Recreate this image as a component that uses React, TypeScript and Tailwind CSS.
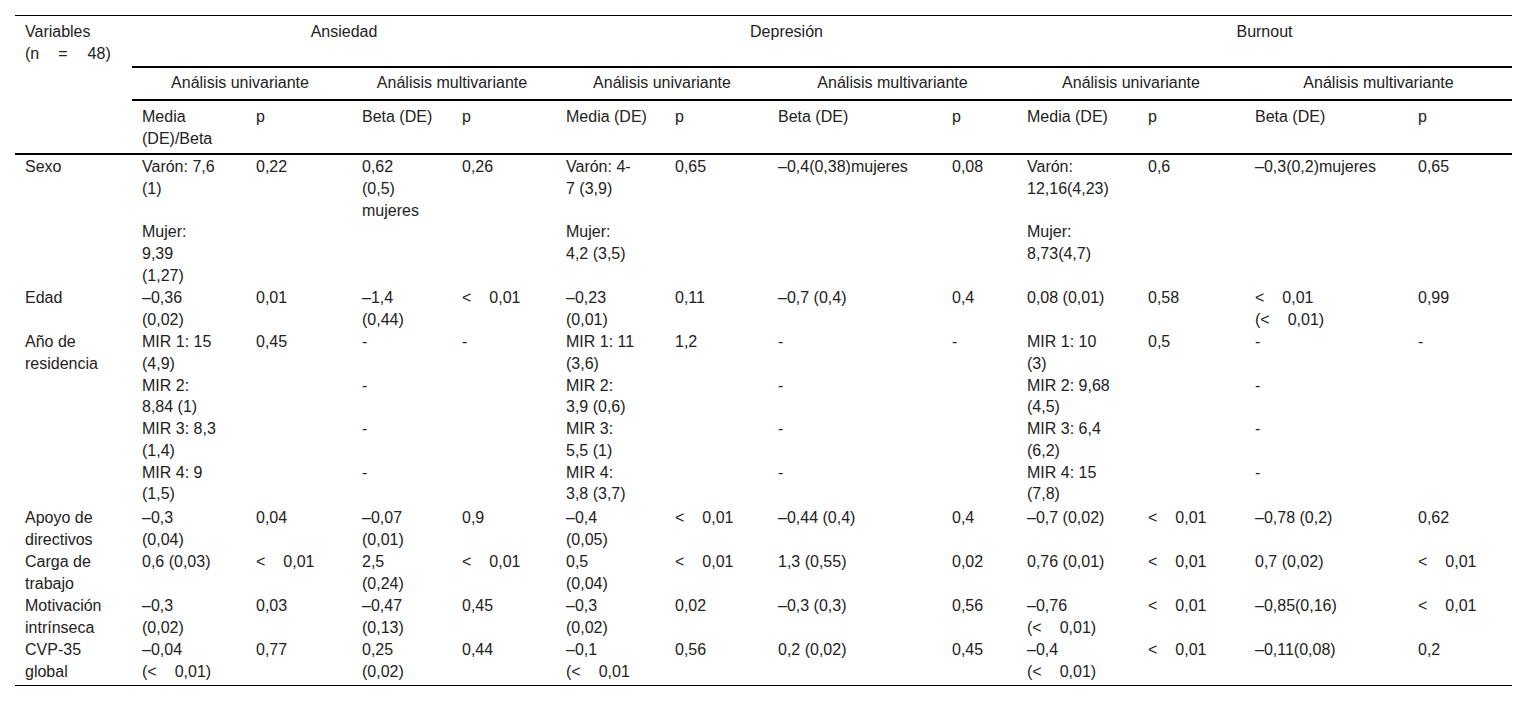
import React from "react";

type Cell = string[];

const COLS =
  "grid grid-cols-[117px_114px_106px_100px_104px_109px_103px_174px_75px_121px_107px_163px_104px]";

function renderLine(line: string) {
  if (!line.includes("<")) return line;
  const parts = line.split("<");
  return (
    <>
      {parts[0]}
      {"<"}
      <span className="inline-block w-[18px]" />
      {parts[1].replace(/^ /, "")}
    </>
  );
}

// extra top padding classes per row (logical group starts)
const ROWPAD = [
  "",
  "",
  "pt-[0.5px]",
  "pt-[0.5px]",
  "",
  "",
  "",
  "pt-[2px]",
  "pt-[0.5px]",
  "pt-[0.5px]",
  "pt-[0.5px]",
];

const rows: Cell[][] = [
  [
    ["Sexo"],
    ["Varón: 7,6", "(1)"],
    ["0,22"],
    ["0,62", "(0,5)", "mujeres"],
    ["0,26"],
    ["Varón: 4-", "7 (3,9)"],
    ["0,65"],
    ["–0,4(0,38)mujeres"],
    ["0,08"],
    ["Varón:", "12,16(4,23)"],
    ["0,6"],
    ["–0,3(0,2)mujeres"],
    ["0,65"],
  ],
  [
    [],
    ["Mujer:", "9,39", "(1,27)"],
    [],
    [],
    [],
    ["Mujer:", "4,2 (3,5)"],
    [],
    [],
    [],
    ["Mujer:", "8,73(4,7)"],
    [],
    [],
    [],
  ],
  [
    ["Edad"],
    ["–0,36", "(0,02)"],
    ["0,01"],
    ["–1,4", "(0,44)"],
    ["< 0,01"],
    ["–0,23", "(0,01)"],
    ["0,11"],
    ["–0,7 (0,4)"],
    ["0,4"],
    ["0,08 (0,01)"],
    ["0,58"],
    ["< 0,01", "(< 0,01)"],
    ["0,99"],
  ],
  [
    ["Año de", "residencia"],
    ["MIR 1: 15", "(4,9)"],
    ["0,45"],
    ["-"],
    ["-"],
    ["MIR 1: 11", "(3,6)"],
    ["1,2"],
    ["-"],
    ["-"],
    ["MIR 1: 10", "(3)"],
    ["0,5"],
    ["-"],
    ["-"],
  ],
  [
    [],
    ["MIR 2:", "8,84 (1)"],
    [],
    ["-"],
    [],
    ["MIR 2:", "3,9 (0,6)"],
    [],
    ["-"],
    [],
    ["MIR 2: 9,68", "(4,5)"],
    [],
    ["-"],
    [],
  ],
  [
    [],
    ["MIR 3: 8,3", "(1,4)"],
    [],
    ["-"],
    [],
    ["MIR 3:", "5,5 (1)"],
    [],
    ["-"],
    [],
    ["MIR 3: 6,4", "(6,2)"],
    [],
    ["-"],
    [],
  ],
  [
    [],
    ["MIR 4: 9", "(1,5)"],
    [],
    ["-"],
    [],
    ["MIR 4:", "3,8 (3,7)"],
    [],
    ["-"],
    [],
    ["MIR 4: 15", "(7,8)"],
    [],
    ["-"],
    [],
  ],
  [
    ["Apoyo de", "directivos"],
    ["–0,3", "(0,04)"],
    ["0,04"],
    ["–0,07", "(0,01)"],
    ["0,9"],
    ["–0,4", "(0,05)"],
    ["< 0,01"],
    ["–0,44 (0,4)"],
    ["0,4"],
    ["–0,7 (0,02)"],
    ["< 0,01"],
    ["–0,78 (0,2)"],
    ["0,62"],
  ],
  [
    ["Carga de", "trabajo"],
    ["0,6 (0,03)"],
    ["< 0,01"],
    ["2,5", "(0,24)"],
    ["< 0,01"],
    ["0,5", "(0,04)"],
    ["< 0,01"],
    ["1,3 (0,55)"],
    ["0,02"],
    ["0,76 (0,01)"],
    ["< 0,01"],
    ["0,7 (0,02)"],
    ["< 0,01"],
  ],
  [
    ["Motivación", "intrínseca"],
    ["–0,3", "(0,02)"],
    ["0,03"],
    ["–0,47", "(0,13)"],
    ["0,45"],
    ["–0,3", "(0,02)"],
    ["0,02"],
    ["–0,3 (0,3)"],
    ["0,56"],
    ["–0,76", "(< 0,01)"],
    ["< 0,01"],
    ["–0,85(0,16)"],
    ["< 0,01"],
  ],
  [
    ["CVP-35", "global"],
    ["–0,04", "(< 0,01)"],
    ["0,77"],
    ["0,25", "(0,02)"],
    ["0,44"],
    ["–0,1", "(< 0,01"],
    ["0,56"],
    ["0,2 (0,02)"],
    ["0,45"],
    ["–0,4", "(< 0,01)"],
    ["< 0,01"],
    ["–0,11(0,08)"],
    ["0,2"],
  ],
];

const sub = [
  "Media|(DE)/Beta",
  "p",
  "Beta (DE)",
  "p",
  "Media (DE)",
  "p",
  "Beta (DE)",
  "p",
  "Media (DE)",
  "p",
  "Beta (DE)",
  "p",
];

export default function App() {
  return (
    <div className="w-[1513px] h-[702px] bg-white font-['Liberation_Sans',Arial,sans-serif] text-[16px] leading-[21.75px] text-[#222]">
      <div className="pt-[15px] pl-[15px]">
        <div className="w-[1497px] border-t border-b border-black">
          {/* header */}
          <div className={COLS}>
            <div className="row-span-3 border-b-2 border-black pl-[10px] pt-[5px] whitespace-nowrap">
              <div>Variables</div>
              <div>
                (n<span className="inline-block w-[19px]" />=
                <span className="inline-block w-[20px]" />
                48)
              </div>
            </div>
            <div className="col-span-4 h-[52px] border-b-2 border-black pt-[5px] text-center">
              Ansiedad
            </div>
            <div className="col-span-4 h-[52px] border-b-2 border-black pt-[5px] text-center">
              Depresión
            </div>
            <div className="col-span-4 h-[52px] border-b-2 border-black pt-[5px] text-center">
              Burnout
            </div>

            <div className="col-span-2 h-[33px] border-b-2 border-black pt-[4px] pr-[4px] text-center">
              Análisis univariante
            </div>
            <div className="col-span-2 h-[33px] border-b-2 border-black pt-[4px] pr-[4px] text-center">
              Análisis multivariante
            </div>
            <div className="col-span-2 h-[33px] border-b-2 border-black pt-[4px] text-center">
              Análisis univariante
            </div>
            <div className="col-span-2 h-[33px] border-b-2 border-black pt-[4px] text-center">
              Análisis multivariante
            </div>
            <div className="col-span-2 h-[33px] border-b-2 border-black pt-[4px] text-center">
              Análisis univariante
            </div>
            <div className="col-span-2 h-[33px] border-b-2 border-black pt-[4px] text-center">
              Análisis multivariante
            </div>

            {sub.map((s, i) => (
              <div
                key={i}
                className="h-[54px] border-b-2 border-black pt-[5px] pl-[10px] whitespace-nowrap"
              >
                {s.split("|").map((l, j) => (
                  <div key={j}>{l}</div>
                ))}
              </div>
            ))}
          </div>

          {/* body */}
          <div className="pt-[1px] pb-[2.5px]">
            {rows.map((r, ri) => (
              <div key={ri} className={COLS + " " + ROWPAD[ri]}>
                {r.map((cell, ci) => (
                  <div key={ci} className="pl-[10px] whitespace-nowrap">
                    {cell.map((l, li) => (
                      <div key={li}>{renderLine(l)}</div>
                    ))}
                  </div>
                ))}
              </div>
            ))}
          </div>
        </div>
      </div>
    </div>
  );
}
